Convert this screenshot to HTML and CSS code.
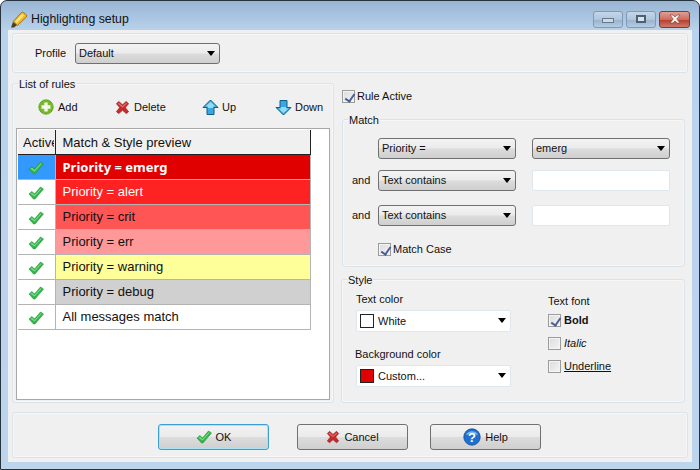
FILE: index.html
```html
<!DOCTYPE html>
<html lang="en">
<head>
    <meta charset="UTF-8">
    <meta name="viewport" content="width=device-width, initial-scale=1.0">
    <title>Highlighting setup</title>
    <link rel="stylesheet" href="styles.css">
</head>
<body>
    <svg class="defs" width="0" height="0">
        <symbol id="tick" viewBox="0 0 16 16">
            <path d="M1 9 L4 6.5 L6.5 9 L12.5 2 L15.5 4 L7 14 L5.5 14 Z" fill="#35b34a" stroke="#1f9a3a" stroke-width=".6"/>
            <path d="M2.5 8.8 L4 7.8 L6.5 10.2 L12.8 3.2 L13.6 3.8 L6.6 11.6 Z" fill="#7fe08a"/>
        </symbol>
        <symbol id="cross" viewBox="0 0 16 16">
            <path d="M1.5 4 L4 1.5 L8 5 L12 1.5 L14.5 4 L11 8 L14.5 12.5 L12 14.5 L8 11 L4 14.5 L1.5 12.5 L5 8 Z" fill="#c62a2a" stroke="#8f2020" stroke-width=".7"/>
            <path d="M3 4 L4 3 L8 6.5 L12 3 L12.8 3.8 L8 8 Z" fill="#e87070"/>
        </symbol>
        <symbol id="arrow" viewBox="0 0 17 17">
            <path d="M8.5 1 L16 8.5 L12 8.5 L12 15.5 L5 15.5 L5 8.5 L1 8.5 Z" fill="#3aa8e0" stroke="#0f5f86" stroke-width="1"/>
            <path d="M8.5 2.8 L13.5 7.6 L11 7.6 L11 9 L6 9 L6 7.6 L3.5 7.6 Z" fill="#8fdcf5"/>
        </symbol>
    </svg>

    <div class="window">
        <header class="titlebar">
            <svg class="title-icon" width="18" height="17" viewBox="0 0 18 17">
                <path d="M1 16.5 L3 11 L7 14 L4 16.5 Z" fill="#4a4020"/>
                <path d="M3.2 10.5 L11.5 1.5 Q12.5 .8 13.5 1.5 L16.5 4 Q17 5 16.3 6 L7.5 14.5 Z" fill="#f5b81a" stroke="#8f6410" stroke-width=".8"/>
                <path d="M5 10.5 L12 3 L14 4.6 L6.8 12 Z" fill="#ffe27a"/>
            </svg>
            <span class="title-text">Highlighting setup</span>
            <div class="caption-btns">
                <div class="caption-btn"><span class="min-mark"></span></div>
                <div class="caption-btn"><span class="max-mark"></span></div>
                <div class="caption-btn close-btn">
                    <svg width="14" height="10" viewBox="0 0 14 10"><path d="M2 1 L5 1 L7 3 L9 1 L12 1 L8.8 5 L12 9 L9 9 L7 7 L5 9 L2 9 L5.2 5 Z" fill="#f4f0ee" stroke="#7a3a30" stroke-width=".6"/></svg>
                </div>
            </div>
        </header>

        <div class="client">
            <section class="panel profile-panel">
                <span class="profile-label">Profile</span>
                <div class="combo profile-combo">Default</div>
            </section>

            <div class="main">
                <section class="group rules-group">
                    <div class="group-title">List of rules</div>
                    <div class="toolbar">
                        <div class="tool">
                            <svg width="16" height="16" viewBox="0 0 16 16">
                                <circle cx="8" cy="8" r="7.2" fill="#76b82a" stroke="#5a9a20" stroke-width=".8"/>
                                <path d="M6.3 3.5 H9.7 V6.3 H12.5 V9.7 H9.7 V12.5 H6.3 V9.7 H3.5 V6.3 H6.3 Z" fill="#f2f9e6"/>
                            </svg>
                            Add
                        </div>
                        <div class="tool">
                            <svg width="15" height="15"><use href="#cross"/></svg>
                            Delete
                        </div>
                        <div class="tool tool-tight">
                            <svg width="17" height="17"><use href="#arrow"/></svg>
                            Up
                        </div>
                        <div class="tool tool-tight">
                            <svg class="flip" width="17" height="17"><use href="#arrow"/></svg>
                            Down
                        </div>
                    </div>

                    <div class="list-box">
                        <table class="rules">
                            <thead>
                                <tr>
                                    <th class="col-active"><div class="clip">Active</div></th>
                                    <th class="col-preview">Match &amp; Style preview</th>
                                </tr>
                            </thead>
                            <tbody>
                                <tr>
                                    <td class="cell-check selected"><svg width="16" height="16"><use href="#tick"/></svg></td>
                                    <td class="rule-emerg">Priority = emerg</td>
                                </tr>
                                <tr>
                                    <td class="cell-check"><svg width="16" height="16"><use href="#tick"/></svg></td>
                                    <td class="rule-alert">Priority = alert</td>
                                </tr>
                                <tr>
                                    <td class="cell-check"><svg width="16" height="16"><use href="#tick"/></svg></td>
                                    <td class="rule-crit">Priority = crit</td>
                                </tr>
                                <tr>
                                    <td class="cell-check"><svg width="16" height="16"><use href="#tick"/></svg></td>
                                    <td class="rule-err">Priority = err</td>
                                </tr>
                                <tr>
                                    <td class="cell-check"><svg width="16" height="16"><use href="#tick"/></svg></td>
                                    <td class="rule-warning">Priority = warning</td>
                                </tr>
                                <tr>
                                    <td class="cell-check"><svg width="16" height="16"><use href="#tick"/></svg></td>
                                    <td class="rule-debug">Priority = debug</td>
                                </tr>
                                <tr>
                                    <td class="cell-check"><svg width="16" height="16"><use href="#tick"/></svg></td>
                                    <td>All messages match</td>
                                </tr>
                            </tbody>
                        </table>
                    </div>
                </section>

                <div class="right-col">
                    <label class="check rule-active"><span class="box on"></span>Rule Active</label>

                    <section class="group match-group">
                        <div class="group-title">Match</div>
                        <div class="match-row first">
                            <span></span>
                            <div class="combo">Priority =</div>
                            <div class="combo">emerg</div>
                        </div>
                        <div class="match-row second">
                            <span class="and">and</span>
                            <div class="combo">Text contains</div>
                            <div class="text-input"></div>
                        </div>
                        <div class="match-row third">
                            <span class="and">and</span>
                            <div class="combo">Text contains</div>
                            <div class="text-input"></div>
                        </div>
                        <label class="check match-case"><span class="box on"></span>Match Case</label>
                    </section>

                    <section class="group style-group">
                        <div class="group-title">Style</div>
                        <div class="style-cols">
                            <div class="color-col">
                                <div class="field-label">Text color</div>
                                <div class="color-combo"><span class="swatch"></span>White</div>
                                <div class="field-label second-label">Background color</div>
                                <div class="color-combo"><span class="swatch swatch-red"></span>Custom...</div>
                            </div>
                            <div class="font-col">
                                <div class="field-label">Text font</div>
                                <label class="check font-check bold"><span class="box on"></span>Bold</label>
                                <label class="check font-check italic"><span class="box"></span>Italic</label>
                                <label class="check font-check"><span class="box"></span><u>Underline</u></label>
                            </div>
                        </div>
                    </section>
                </div>
            </div>

            <footer class="panel button-panel">
                <button type="button" class="btn focused"><svg width="16" height="16"><use href="#tick"/></svg>OK</button>
                <button type="button" class="btn btn-cancel"><svg width="14" height="14"><use href="#cross"/></svg>Cancel</button>
                <button type="button" class="btn btn-help">
                    <svg width="18" height="18" viewBox="0 0 18 18">
                        <circle cx="9" cy="9" r="8.2" fill="#1f6fd0" stroke="#134a90" stroke-width=".8"/>
                        <path d="M3 7 A6.5 6 0 0 1 15 7 Q9 5 3 7 Z" fill="#7fb6ee"/>
                        <text x="9" y="13.5" class="help-mark" text-anchor="middle">?</text>
                    </svg>Help
                </button>
            </footer>
        </div>
    </div>
</body>
</html>
```

FILE: styles.css
```css
* {
    box-sizing: border-box;
}

body {
    margin: 0;
    background-color: #fff;
    font-family: "Liberation Sans", Arial, sans-serif;
    font-size: 11px;
    color: #111;
}

.defs {
    display: block;
    height: 0;
}

.window {
    width: 700px;
    height: 470px;
    padding: 0 7px 7px;
    border: 1px solid #25333d;
    border-radius: 7px 7px 0 0;
    background: linear-gradient(to bottom, #98b5d3 0, #bad3ec 30px, #bcd4ec 100%);
    overflow: hidden;
}

.titlebar {
    display: flex;
    align-items: center;
    height: 29px;
}

.title-icon {
    margin: 8px 3px 0 2px;
}

.title-text {
    margin-top: 7px;
    font-size: 12.3px;
}

.caption-btns {
    display: flex;
    gap: 3px;
    margin: 7px 2px 0 auto;
}

.caption-btn {
    display: flex;
    align-items: center;
    justify-content: center;
    width: 30px;
    height: 17px;
    border: 1px solid #7f9ab5;
    border-radius: 3px;
    background: linear-gradient(to bottom, #c5d7e8 0, #afc6dc 50%, #9ab5cf 55%, #b5cce2 100%);
}

.close-btn {
    width: 31px;
    border-color: #7d3b35;
    background: linear-gradient(to bottom, #e0a094 0, #cf6b5c 50%, #b83f30 55%, #cf7a68 100%);
}

.min-mark {
    width: 12px;
    height: 5px;
    margin-top: 3px;
    border: 1px solid #66798d;
    background-color: #cfd9e2;
}

.max-mark {
    width: 10px;
    height: 8px;
    border: 2px solid #4d6075;
    background-color: #d8e3ec;
}

.client {
    height: 432px;
    padding: 3px 3px 0 4px;
    background-color: #f0f0f0;
}

.panel,
.group {
    border: 1px solid #d9e3ec;
    border-radius: 3px;
    box-shadow: inset 0 0 0 1px #f7f7f7;
}

.profile-panel {
    display: flex;
    align-items: center;
    height: 40px;
    margin-right: 1px;
    padding-left: 22px;
}

.profile-label {
    width: 40px;
}

.combo {
    position: relative;
    height: 21px;
    padding: 3px;
    border: 1px solid #707070;
    border-radius: 3px;
    background: linear-gradient(to bottom, #f3f3f3 0, #ebebeb 48%, #dcdcdc 52%, #cfcfcf 100%);
    white-space: nowrap;
}

.combo::after,
.color-combo::after {
    content: "";
    position: absolute;
    top: 7px;
    right: 4px;
    border-top: 5px solid #000;
    border-left: 4px solid transparent;
    border-right: 4px solid transparent;
}

.profile-combo {
    width: 145px;
}

.main {
    display: flex;
    gap: 7px;
    height: 320px;
    margin-top: 10px;
}

.group-title {
    width: fit-content;
    margin: -8px 0 0 5px;
    padding: 0 1px;
    background-color: #f0f0f0;
    line-height: 16px;
}

.rules-group {
    width: 322px;
}

.toolbar {
    display: grid;
    grid-template-columns: 77px 87px 73px auto;
    height: 29px;
    margin-top: 1px;
    padding: 5px 0 0 25px;
}

.tool {
    display: flex;
    align-items: center;
    gap: 4px;
    height: 18px;
}

.tool-tight {
    gap: 3px;
}

.flip {
    transform: scaleY(-1);
}

.list-box {
    width: 314px;
    height: 272px;
    margin: 6px 0 0 3px;
    padding: 1px;
    border: 1px solid #a8a8a8;
    background-color: #fff;
}

.rules {
    width: 293px;
    border-collapse: collapse;
    table-layout: fixed;
}

.rules th {
    height: 24px;
    padding: 1px 0 0 7px;
    border-right: 1px solid #222;
    border-bottom: 1px solid #222;
    background-color: #f0f0f0;
    font-weight: normal;
    font-size: 13px;
    text-align: left;
    white-space: nowrap;
}

.rules .col-active {
    width: 37px;
    padding-left: 5px;
}

.clip {
    width: 31px;
    overflow: hidden;
}

.rules td {
    height: 25px;
    padding: 0 0 0 7px;
    border-right: 1px solid #b4b4b4;
    border-bottom: 1px solid #b4b4b4;
    font-size: 13px;
}

.rules .cell-check {
    padding: 2px 0 0 10px;
    line-height: 0;
}

.rules .selected {
    background-color: #3399ff;
}

.rules .rule-emerg {
    background-color: #e00000;
    color: #fff;
    font-family: "Noto Sans", Arial, sans-serif;
    font-weight: bold;
}

.rules .rule-alert {
    background-color: #ff2222;
    color: #fff;
}

.rule-crit {
    background-color: #ff5555;
}

.rule-err {
    background-color: #ff9999;
}

.rule-warning {
    background-color: #ffff99;
}

.rule-debug {
    background-color: #d0d0d0;
}

.right-col {
    width: 344px;
}

.check {
    display: flex;
    align-items: center;
    gap: 2px;
}

.box {
    position: relative;
    flex: none;
    width: 13px;
    height: 13px;
    border: 1px solid #9a9b9b;
    background: linear-gradient(135deg, #dcdcdc, #f4f4f4);
    box-shadow: inset 0 0 0 1px #f4f4f4;
}

/* tick of a checkbox, made of two borders */
.box.on::after {
    content: "";
    position: absolute;
    left: 4px;
    top: 1px;
    width: 4px;
    height: 8px;
    border-right: 2px solid #4a5f97;
    border-bottom: 2px solid #4a5f97;
    transform: rotate(35deg);
}

.rule-active {
    height: 14px;
    margin: 6px 0 0 1px;
}

.match-group {
    height: 148px;
    margin: 16px 0 0 1px;
}

.match-row {
    display: grid;
    grid-template-columns: 36px 138px 154px;
    align-items: center;
    margin-left: -1px;
}

.match-row > :last-child {
    margin-left: 16px;
}

.match-row.first {
    margin-top: 10px;
}

.match-row.second {
    margin-top: 11px;
}

.match-row.third {
    margin-top: 14px;
}

.and {
    margin-bottom: 2px;
    padding-left: 10px;
}

.text-input {
    height: 21px;
    border: 1px solid #dfe6ee;
    border-radius: 2px;
    background-color: #fff;
}

.match-case {
    height: 14px;
    margin: 16px 0 0 35px;
}

.style-group {
    height: 124px;
    margin-top: 12px;
}

.style-cols {
    display: flex;
    padding-left: 14px;
}

.color-col {
    width: 192px;
}

.field-label {
    height: 16px;
    margin-top: 3px;
    line-height: 16px;
}

.second-label {
    margin-top: 14px;
    margin-left: -1px;
}

.color-combo {
    position: relative;
    display: flex;
    align-items: center;
    gap: 4px;
    width: 155px;
    height: 22px;
    margin-top: 3px;
    padding-left: 3px;
    border: 1px solid #dfe6ee;
    border-radius: 2px;
    background-color: #fff;
}

.swatch {
    width: 14px;
    height: 14px;
    border: 1px solid #222;
    background-color: #fff;
}

.swatch-red {
    background-color: #e00000;
}

.font-col {
    padding-top: 2px;
}

.font-check {
    height: 14px;
    margin-top: 9px;
    gap: 3px;
}

.font-col .field-label + .font-check {
    margin-top: 4px;
}

.bold {
    font-weight: bold;
}

.italic {
    font-style: italic;
}

.button-panel {
    display: flex;
    align-items: center;
    height: 46px;
    margin-top: 9px;
    margin-right: 1px;
    padding: 4px 0 0 145px;
}

.btn {
    display: flex;
    align-items: center;
    justify-content: center;
    gap: 4px;
    width: 111px;
    height: 26px;
    padding: 0;
    border: 1px solid #707070;
    border-radius: 3px;
    background: linear-gradient(to bottom, #f3f3f3 0, #ebebeb 48%, #dcdcdc 52%, #cfcfcf 100%);
    font: inherit;
    color: inherit;
}

.focused {
    border-color: #3c9fd0;
    box-shadow: inset 0 0 0 1px #a8e4f8;
}

.btn-cancel {
    margin-left: 28px;
}

.btn-help {
    margin-left: 22px;
}

.help-mark {
    font-family: "Liberation Sans", Arial, sans-serif;
    font-size: 13px;
    font-weight: bold;
    fill: #fff;
}
```
